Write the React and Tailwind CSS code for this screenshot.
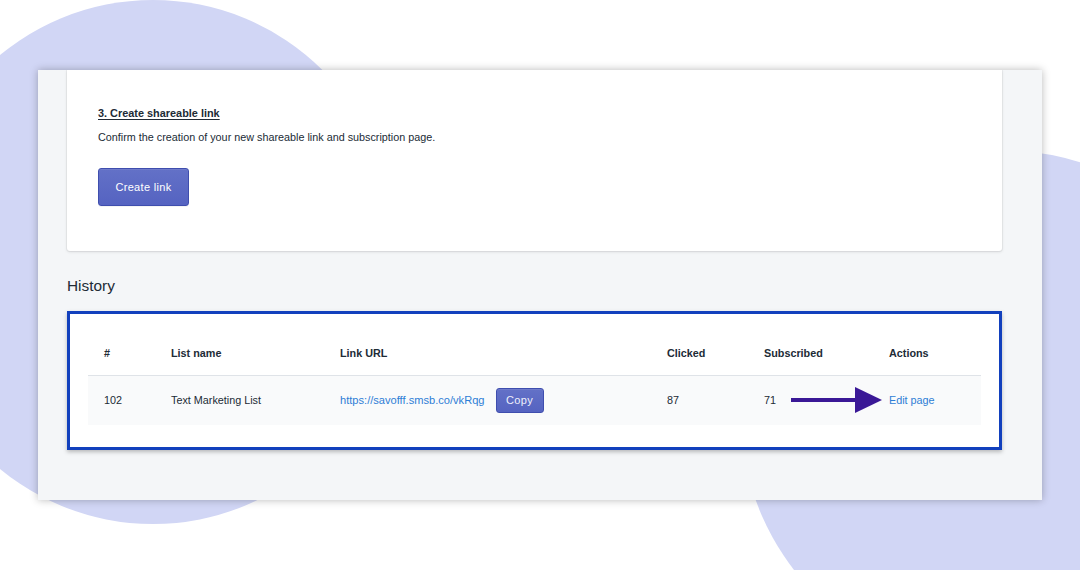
import React from 'react';

const cols = 'grid grid-cols-[67px_169px_327px_97px_125px_109px]';

function Arrow() {
  return (
    <svg width="92" height="26" viewBox="0 0 92 26" className="absolute left-[703px] top-[11px]">
      <rect x="0" y="11" width="68" height="4" fill="#3a1896" />
      <polygon points="64,0 91,13 64,26" fill="#3a1896" />
    </svg>
  );
}

export default function App() {
  return (
    <div
      className="relative w-[1080px] h-[570px] overflow-hidden bg-white text-[#212b36]"
      style={{ fontFamily: '"Liberation Sans", Arial, sans-serif' }}
    >
      {/* background blobs */}
      <div className="absolute left-[-87px] top-0 w-[480px] h-[524px] rounded-full bg-[#d1d6f5]" />
      <div className="absolute left-[740px] top-[150px] w-[522px] h-[522px] rounded-full bg-[#d1d6f5]" />

      <div className="relative ml-[38px] mt-[70px] w-[1004px] h-[430px] bg-[#f4f6f8] overflow-hidden shadow-[0_0_8px_rgba(0,0,0,0.28)] pl-[29px] pr-[40px]">
        {/* step card */}
        <div className="bg-white rounded-b-[3px] shadow-[0_0_0_1px_rgba(63,63,68,0.05),0_1px_3px_0_rgba(63,63,68,0.15)] pt-[35px] pl-[31px] pb-[45px]">
          <h3 className="text-[10.9px] leading-[16px] font-bold underline underline-offset-2">
            3. Create shareable link
          </h3>
          <p className="mt-[8px] text-[10.8px] leading-[16px]">
            Confirm the creation of your new shareable link and subscription page.
          </p>
          <button className="mt-[23px] w-[91px] h-[38px] rounded-[3px] border border-[#3f4eae] bg-gradient-to-b from-[#6371c7] to-[#5563c1] text-[11px] tracking-[0.03em] text-white shadow-[inset_0_1px_0_0_#6f7bcb,0_1px_0_0_rgba(22,29,37,0.05)]">
            Create link
          </button>
        </div>

        <h2 className="mt-[25px] text-[15.4px] leading-[20px]">History</h2>

        {/* history table */}
        <div className="mt-[15px] h-[139px] border-[3px] border-[#1240bd] bg-white shadow-[0_2px_4px_rgba(0,0,0,0.25)] pt-[17px] px-[18px]">
          <div className={`${cols} h-[45px] items-center border-b border-[#dfe3e8] text-[10.8px] font-bold`}>
            <div className="pl-[16px]">#</div>
            <div className="pl-[16px]">List name</div>
            <div className="pl-[16px]">Link URL</div>
            <div className="pl-[16px]">Clicked</div>
            <div className="pl-[16px]">Subscribed</div>
            <div className="pl-[16px]">Actions</div>
          </div>
          <div className={`${cols} relative h-[49px] items-center bg-[#f9fafb] text-[10.8px]`}>
            <div className="pl-[16px]">102</div>
            <div className="pl-[16px]">Text Marketing List</div>
            <div className="pl-[16px] flex items-center">
              <span className="text-[#2e7dd6] text-[11.1px]">https://savofff.smsb.co/vkRqg</span>
              <button className="ml-[11px] w-[48px] h-[25px] rounded-[3px] border border-[#3f4eae] bg-gradient-to-b from-[#6371c7] to-[#5563c1] text-[11px] tracking-[0.03em] text-[#eef0fb] shadow-[inset_0_1px_0_0_#6f7bcb]">
                Copy
              </button>
            </div>
            <div className="pl-[16px]">87</div>
            <div className="pl-[16px]">71</div>
            <div className="pl-[16px] text-[#2e7dd6]">Edit page</div>
            <Arrow />
          </div>
        </div>
      </div>
    </div>
  );
}
